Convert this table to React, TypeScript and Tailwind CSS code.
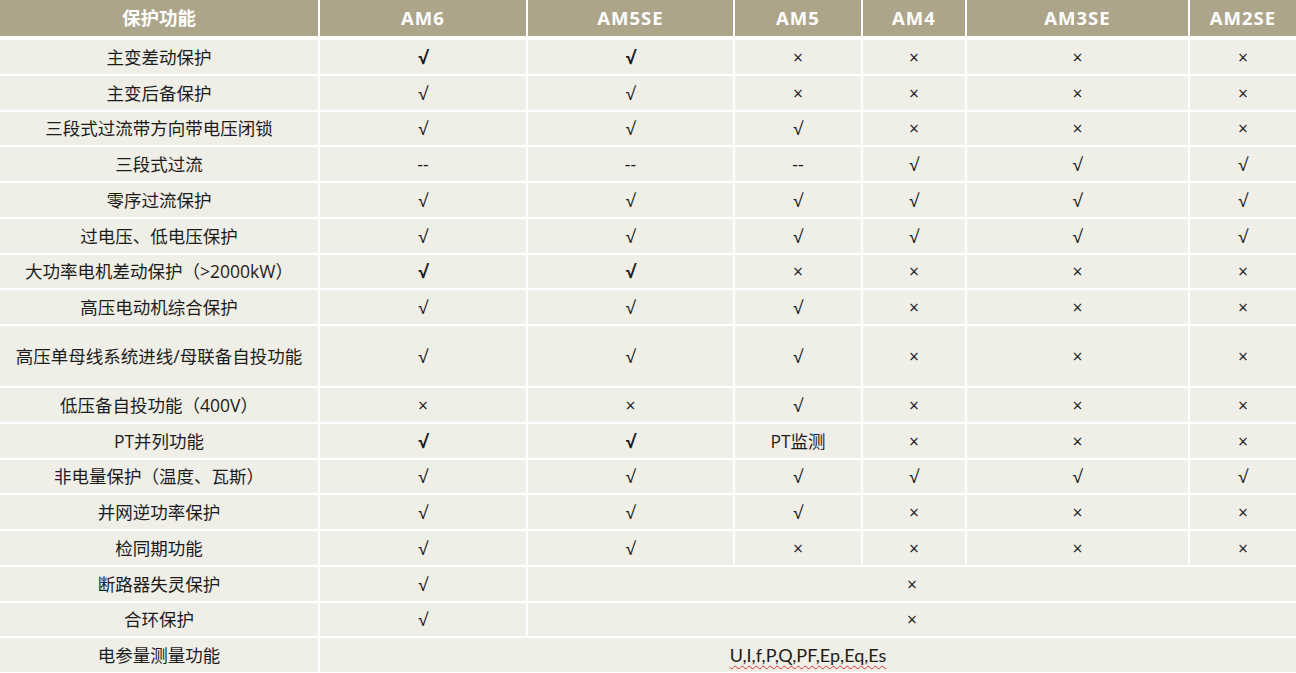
import React from "react"

type Cell = { text: string; bold?: boolean; span?: number; squiggle?: boolean }

interface Row {
  label: string
  cells: Cell[]
  tall?: boolean
}

const Y = "√"
const N = "×"

const c = (text: string, bold = false): Cell => ({ text, bold })

const headers = ["保护功能", "AM6", "AM5SE", "AM5", "AM4", "AM3SE", "AM2SE"]

const rows: Row[] = [
  { label: "主变差动保护", cells: [c(Y, true), c(Y, true), c(N), c(N), c(N), c(N)] },
  { label: "主变后备保护", cells: [c(Y), c(Y), c(N), c(N), c(N), c(N)] },
  { label: "三段式过流带方向带电压闭锁", cells: [c(Y), c(Y), c(Y), c(N), c(N), c(N)] },
  { label: "三段式过流", cells: [c("--"), c("--"), c("--"), c(Y), c(Y), c(Y)] },
  { label: "零序过流保护", cells: [c(Y), c(Y), c(Y), c(Y), c(Y), c(Y)] },
  { label: "过电压、低电压保护", cells: [c(Y), c(Y), c(Y), c(Y), c(Y), c(Y)] },
  { label: "大功率电机差动保护（>2000kW）", cells: [c(Y, true), c(Y, true), c(N), c(N), c(N), c(N)] },
  { label: "高压电动机综合保护", cells: [c(Y), c(Y), c(Y), c(N), c(N), c(N)] },
  { label: "高压单母线系统进线/母联备自投功能", tall: true, cells: [c(Y), c(Y), c(Y), c(N), c(N), c(N)] },
  { label: "低压备自投功能（400V）", cells: [c(N), c(N), c(Y), c(N), c(N), c(N)] },
  { label: "PT并列功能", cells: [c(Y, true), c(Y, true), c("PT监测"), c(N), c(N), c(N)] },
  { label: "非电量保护（温度、瓦斯）", cells: [c(Y), c(Y), c(Y), c(Y), c(Y), c(Y)] },
  { label: "并网逆功率保护", cells: [c(Y), c(Y), c(Y), c(N), c(N), c(N)] },
  { label: "检同期功能", cells: [c(Y), c(Y), c(N), c(N), c(N), c(N)] },
  { label: "断路器失灵保护", cells: [c(Y), { text: N, span: 5 }] },
  { label: "合环保护", cells: [c(Y), { text: N, span: 5 }] },
  { label: "电参量测量功能", cells: [{ text: "U,I,f,P,Q,PF,Ep,Eq,Es", span: 6, squiggle: true }] },
]

const spanClass: Record<number, string> = {
  1: "col-span-1",
  5: "col-span-5",
  6: "col-span-6",
}

export default function App() {
  return (
    <div className="w-[1296px] h-[673px] bg-white overflow-hidden font-['Open_Sans','Noto_Sans_CJK_SC',sans-serif] text-[#1c1c1c]">
      <div className="grid grid-cols-[318px_206px_205px_126px_102px_221px_1fr] gap-x-[2px] gap-y-[2px]">
        {/* Header */}
        {headers.map((h, i) => (
          <div
            key={h}
            className={`h-[36px] mb-[2px] bg-[#ada58a] flex items-center justify-center text-white font-bold text-[18.5px] ${i > 0 ? "tracking-[1px]" : ""}`}
          >
            {h}
          </div>
        ))}

        {/* Body */}
        {rows.map((row) => (
          <React.Fragment key={row.label}>
            <div
              className={`${row.tall ? "h-[60px]" : "h-[33.75px]"} bg-[#efeee7] flex items-center justify-center text-[17.5px]`}
            >
              {row.label}
            </div>
            {row.cells.map((cell, i) => (
              <div
                key={i}
                className={`${spanClass[cell.span ?? 1]} ${row.tall ? "h-[60px]" : "h-[33.75px]"} bg-[#efeee7] flex items-center justify-center text-[17.5px]`}
              >
                {cell.squiggle ? (
                  <span className="font-['Lato',sans-serif] text-[18px] underline decoration-wavy decoration-[#e03030] decoration-1 underline-offset-[3px]">
                    {cell.text}
                  </span>
                ) : (
                  <span className={cell.bold ? "font-bold" : "font-normal"}>{cell.text}</span>
                )}
              </div>
            ))}
          </React.Fragment>
        ))}
      </div>
    </div>
  )
}
